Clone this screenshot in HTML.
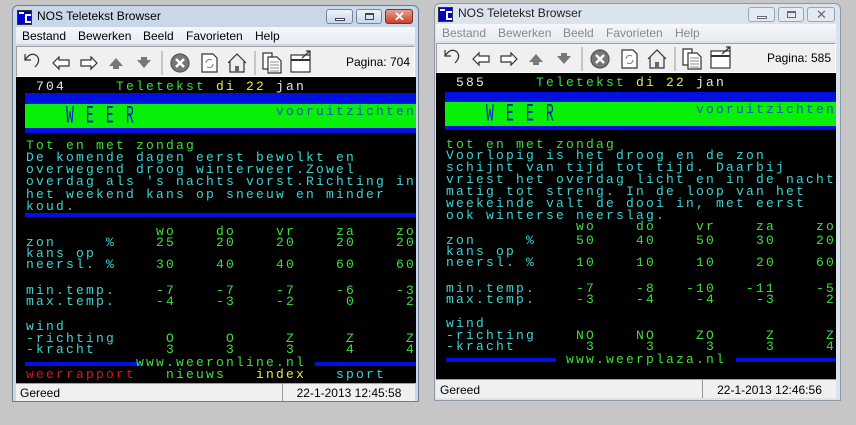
<!DOCTYPE html>
<html><head><meta charset="utf-8"><style>
*{margin:0;padding:0;box-sizing:border-box}
body{width:856px;height:425px;background:#c6c6c6;position:relative;overflow:hidden;font-family:"Liberation Sans",sans-serif}
.a{position:absolute}
.frame{position:absolute;border:1px solid #6d7c8e;border-radius:6px 6px 0 0;background:#c9d7e8}
.frame.in{background:#dbe3ec;border-color:#8d99a6}
.title{position:absolute;font-size:12px;color:#000;white-space:nowrap}
.menu{position:absolute;background:linear-gradient(#f4f7fb,#e6ebf2);font-size:12px;white-space:nowrap}
.menu span{position:absolute;top:2px}
.tbar{position:absolute;background:#f0f0f0;border:1px solid #a0a0a0;border-right-color:#fff;border-bottom-color:#fff}
.screen{position:absolute;background:#000;overflow:hidden}
.screen div{position:absolute;white-space:pre;font-family:"Liberation Mono",monospace;font-size:13px;letter-spacing:2.2px;line-height:12px;height:12px}
.c{color:#3ad6d6}.g{color:#3ae03a}.y{color:#e8e84a}.w{color:#e8e8e8}.r{color:#d81818}
.screen div.bb{background:#0010e0}
.status{position:absolute;background:#f0f0f0;font-size:12px}
.btn{position:absolute;top:4px;height:15px;border:1px solid #7387a0;border-radius:3px;background:linear-gradient(#eef3f9,#c9d7e8)}
</style></head><body>
<svg width="0" height="0" style="position:absolute">
<defs>
<g id="tb" fill="none" stroke="#333" stroke-width="1.2">
<path d="M8 7 L8 13 L14 13 M8 13 Q14 4 20 9 Q24 14 18 20" />
<path d="M36 16 L42 10 L42 13 L52 13 L52 19 L42 19 L42 22 Z" fill="#fff"/>
<path d="M80 16 L74 10 L74 13 L64 13 L64 19 L74 19 L74 22 Z" fill="#fff"/>
<path d="M92 19 L99 11 L106 19 L102 19 L102 22 L96 22 L96 19 Z" fill="#777" stroke="none"/>
<path d="M120 13 L127 21 L134 13 L130 13 L130 10 L124 10 L124 13 Z" fill="#777" stroke="none"/>
<line x1="145" y1="4" x2="145" y2="28" stroke="#aaa"/>
<circle cx="163" cy="16" r="9" fill="#777" stroke="#555"/>
<path d="M159 12 L167 20 M167 12 L159 20" stroke="#fff" stroke-width="2.4"/>
<path d="M185 7 L196 7 L200 11 L200 25 L185 25 Z" fill="#fff"/>
<path d="M189 16 Q190 11 195 13 M196 17 Q195 22 190 20" stroke="#888"/>
<path d="M211 16 L220 7 L229 16 M213 14 L213 25 L227 25 L227 14" fill="#eee"/>
<rect x="218" y="19" width="4" height="6" fill="#666" stroke="none"/>
<line x1="238" y1="4" x2="238" y2="28" stroke="#aaa"/>
<path d="M246 6 L255 6 L255 22 L246 22 Z" fill="#fff"/><path d="M251 10 L260 10 L264 14 L264 26 L251 26 Z" fill="#fff"/>
<path d="M253 15h9M253 18h9M253 21h9M253 24h9" stroke="#666" stroke-width="0.8"/>
<rect x="274" y="8" width="19" height="17" fill="#fff"/><path d="M274 13 L293 13" stroke-width="2"/>
<path d="M285 11 L293 4 M289 4 L293 4 L293 8"/>
</g>
</defs></svg>

<!-- LEFT WINDOW -->
<div class="frame" style="left:12px;top:5px;width:407px;height:397px"></div>
<div class="a" style="left:17px;top:10px;width:15px;height:15px;background:#0000d0;border:1px solid #333"><div class="a" style="left:7px;top:3px;width:6px;height:9px;border:2px solid #fff;border-right:none"></div><div class="a" style="left:1px;top:1px;width:5px;height:2px;background:#fff"></div></div>
<div class="title" style="left:37px;top:9px">NOS Teletekst Browser</div>
<div class="btn" style="left:326px;top:9px;width:27px"><div class="a" style="left:8px;top:8px;width:10px;height:3px;background:#fff;border:1px solid #445"></div></div>
<div class="btn" style="left:356px;top:9px;width:26px"><div class="a" style="left:8px;top:3px;width:9px;height:7px;border:1px solid #445;border-top-width:2px"></div></div>
<div class="btn" style="left:385px;top:9px;width:28px;background:linear-gradient(#e8a090,#c8402c);border-color:#803020"><div class="a" style="left:8px;top:-1px;color:#fff;font-weight:bold;font-size:13px">✕</div></div>
<div class="menu" style="left:16px;top:27px;width:399px;height:17px"><span style="left:6px">Bestand</span><span style="left:62px">Bewerken</span><span style="left:127px">Beeld</span><span style="left:170px">Favorieten</span><span style="left:239px">Help</span></div>
<div class="tbar" style="left:16px;top:46px;width:399px;height:31px"><svg class="a" style="left:0;top:0" width="300" height="30"><use href="#tb"/></svg><div class="a" style="right:4px;top:8px;font-size:12px">Pagina: 704</div></div>
<div class="screen" style="left:16px;top:77px;width:400px;height:306px">
<div style="left:0;top:4px"><span class="w">  704     </span><span class="g">Teletekst</span><span class="y"> di 22 </span><span class="w">jan</span></div>
<div class="bb" style="left:9px;top:16px;width:391px;height:11px"></div>
<div style="left:9px;top:27px;width:391px;height:24px;background:#08f008"></div>
<div class="bb" style="left:9px;top:51px;width:391px;height:5px"></div>
<div style="left:50px;top:34px;color:#0018c8;transform:scaleY(1.9);font-size:13px">W E E R</div>
<div style="left:260px;top:29px;color:#0a58b0">vooruitzichten</div>
<div class="g" style="left:0;top:63px"> Tot en met zondag</div>
<div class="c" style="left:0;top:75px"> De komende dagen eerst bewolkt en</div>
<div class="c" style="left:0;top:87px"> overwegend droog winterweer.Zowel</div>
<div class="c" style="left:0;top:99px"> overdag als 's nachts vorst.Richting in</div>
<div class="c" style="left:0;top:112px"> het weekend kans op sneeuw en minder</div>
<div class="c" style="left:0;top:124px"> koud.</div>
<div class="bb" style="left:9px;top:136px;width:391px;height:4px"></div>
<div class="g" style="left:0;top:149px">              wo    do    vr    za    zo</div>
<div style="left:0;top:160px"><span class="c"> zon     %</span><span class="g">    25    20    20    20    20</span></div>
<div class="c" style="left:0;top:171px"> kans op</div>
<div style="left:0;top:182px"><span class="c"> neersl. %</span><span class="g">    30    40    40    60    60</span></div>
<div style="left:0;top:208px"><span class="c"> min.temp.</span><span class="g">    -7    -7    -7    -6    -3</span></div>
<div style="left:0;top:219px"><span class="c"> max.temp.</span><span class="g">    -4    -3    -2     0     2</span></div>
<div class="c" style="left:0;top:244px"> wind</div>
<div style="left:0;top:256px"><span class="c"> -richting</span><span class="g">     O     O     Z     Z     Z</span></div>
<div style="left:0;top:267px"><span class="c"> -kracht</span><span class="g">       3     3     3     4     4</span></div>
<div class="bb" style="left:9px;top:285px;width:116px;height:4px"></div>
<div class="bb" style="left:299px;top:285px;width:101px;height:4px"></div>
<div class="g" style="left:120px;top:280px">www.weeronline.nl</div>
<div style="left:0;top:292px"><span class="r"> weerrapport</span><span class="g">   nieuws</span><span class="y">   index</span><span class="c">   sport</span></div>
</div>
<div class="status" style="left:16px;top:383px;width:399px;height:18px;border-top:1px solid #a0a0a0"><div class="a" style="left:4px;top:2px">Gereed</div><div class="a" style="left:266px;top:0;width:133px;height:17px;border-left:1px solid #999;text-align:center;padding-top:2px">22-1-2013 12:45:58</div></div>

<!-- RIGHT WINDOW -->
<div class="frame in" style="left:434px;top:3px;width:407px;height:398px"></div>
<div class="a" style="left:438px;top:7px;width:15px;height:15px;background:#0000d0;border:1px solid #333"><div class="a" style="left:7px;top:3px;width:6px;height:9px;border:2px solid #fff;border-right:none"></div><div class="a" style="left:1px;top:1px;width:5px;height:2px;background:#fff"></div></div>
<div class="title" style="left:458px;top:6px;color:#222">NOS Teletekst Browser</div>
<div class="btn" style="left:748px;top:7px;width:27px;background:#e4eaf1;border-color:#9aa6b4"><div class="a" style="left:8px;top:8px;width:10px;height:3px;background:#fff;border:1px solid #667"></div></div>
<div class="btn" style="left:778px;top:7px;width:26px;background:#e4eaf1;border-color:#9aa6b4"><div class="a" style="left:8px;top:3px;width:9px;height:7px;border:1px solid #667;border-top-width:2px"></div></div>
<div class="btn" style="left:807px;top:7px;width:28px;background:#e4eaf1;border-color:#9aa6b4"><div class="a" style="left:8px;top:-1px;color:#667;font-size:13px">✕</div></div>
<div class="menu" style="left:436px;top:24px;width:400px;height:17px;color:#888"><span style="left:6px">Bestand</span><span style="left:62px">Bewerken</span><span style="left:127px">Beeld</span><span style="left:170px">Favorieten</span><span style="left:239px">Help</span></div>
<div class="tbar" style="left:436px;top:43px;width:400px;height:30px"><svg class="a" style="left:0;top:-1px" width="300" height="30"><use href="#tb"/></svg><div class="a" style="right:4px;top:7px;font-size:12px">Pagina: 585</div></div>
<div class="screen" style="left:436px;top:73px;width:400px;height:306px">
<div style="left:0;top:4px"><span class="w">  585     </span><span class="g">Teletekst</span><span class="y"> di 22 </span><span class="w">jan</span></div>
<div class="bb" style="left:9px;top:19px;width:391px;height:10px"></div>
<div style="left:9px;top:29px;width:391px;height:24px;background:#08f008"></div>
<div class="bb" style="left:9px;top:53px;width:391px;height:4px"></div>
<div style="left:50px;top:36px;color:#0018c8;transform:scaleY(1.9);font-size:13px">W E E R</div>
<div style="left:260px;top:31px;color:#0a58b0">vooruitzichten</div>
<div class="g" style="left:0;top:66px"> tot en met zondag</div>
<div class="c" style="left:0;top:77px"> Voorlopig is het droog en de zon</div>
<div class="c" style="left:0;top:89px"> schijnt van tijd tot tijd. Daarbij</div>
<div class="c" style="left:0;top:101px"> vriest het overdag licht en in de nacht</div>
<div class="c" style="left:0;top:113px"> matig tot streng. In de loop van het</div>
<div class="c" style="left:0;top:125px"> weekeinde valt de dooi in, met eerst</div>
<div class="c" style="left:0;top:137px"> ook winterse neerslag.</div>
<div class="g" style="left:0;top:148px">              wo    do    vr    za    zo</div>
<div style="left:0;top:162px"><span class="c"> zon     %</span><span class="g">    50    40    50    30    20</span></div>
<div class="c" style="left:0;top:173px"> kans op</div>
<div style="left:0;top:184px"><span class="c"> neersl. %</span><span class="g">    10    10    10    20    60</span></div>
<div style="left:0;top:210px"><span class="c"> min.temp.</span><span class="g">    -7    -8   -10   -11    -5</span></div>
<div style="left:0;top:221px"><span class="c"> max.temp.</span><span class="g">    -3    -4    -4    -3     2</span></div>
<div class="c" style="left:0;top:245px"> wind</div>
<div style="left:0;top:257px"><span class="c"> -richting</span><span class="g">    NO    NO    ZO     Z     Z</span></div>
<div style="left:0;top:268px"><span class="c"> -kracht</span><span class="g">       3     3     3     3     4</span></div>
<div class="bb" style="left:10px;top:285px;width:110px;height:4px"></div>
<div class="bb" style="left:300px;top:285px;width:100px;height:4px"></div>
<div class="g" style="left:130px;top:281px">www.weerplaza.nl</div>
</div>
<div class="status" style="left:436px;top:379px;width:400px;height:19px;border-top:1px solid #a0a0a0"><div class="a" style="left:4px;top:3px">Gereed</div><div class="a" style="left:266px;top:0;width:134px;height:18px;border-left:1px solid #999;text-align:center;padding-top:3px">22-1-2013 12:46:56</div></div>
</body></html>
